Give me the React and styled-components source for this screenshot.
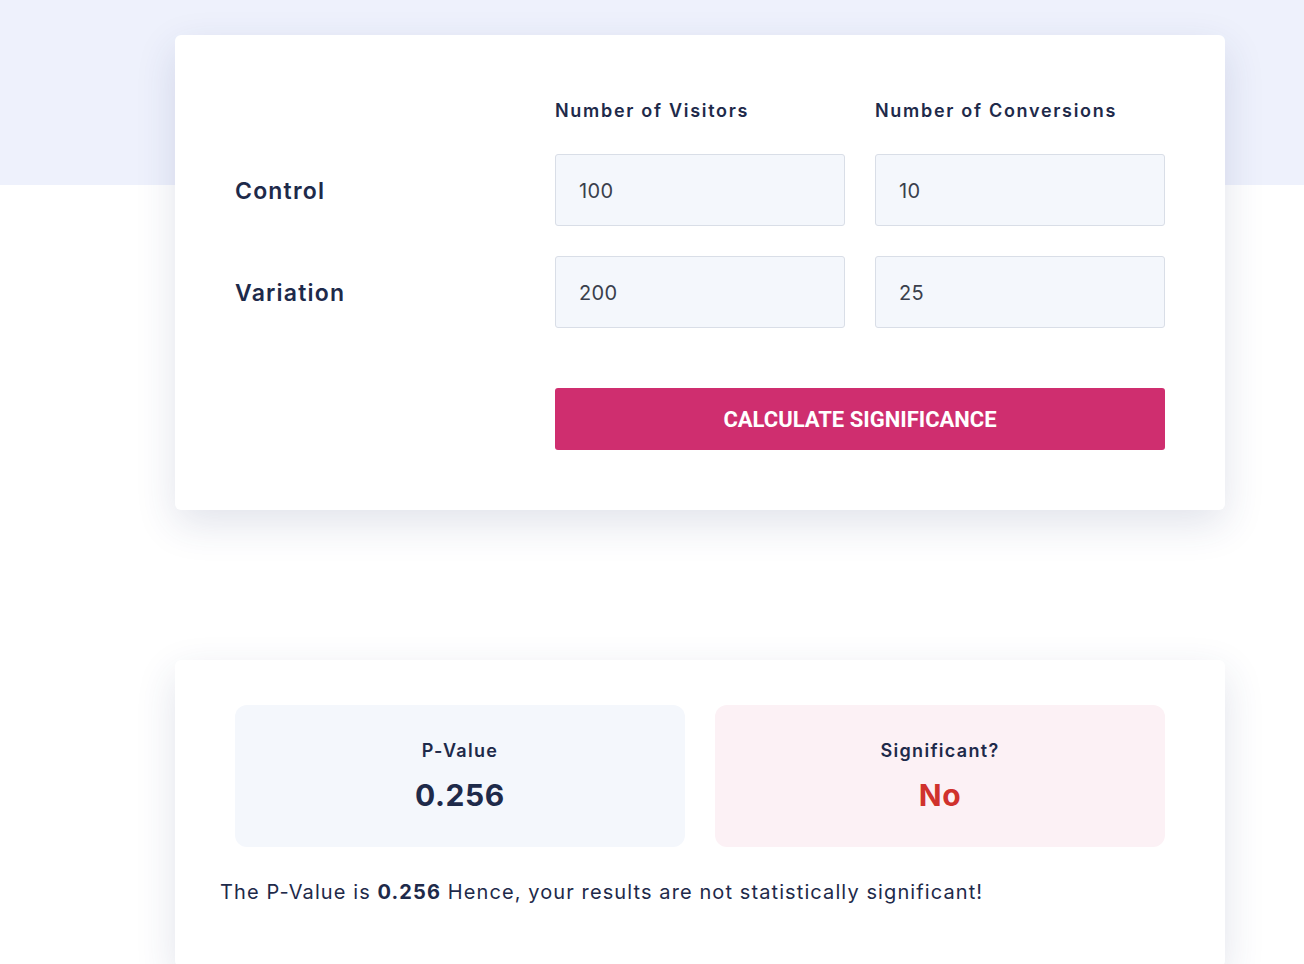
import React from 'react'
import styled, { createGlobalStyle } from 'styled-components'

const GlobalStyle = createGlobalStyle`
  body {
    margin: 0;
    background: #fff;
    font-family: Inter, "Noto Sans", sans-serif;
    color: #1e2a4a;
  }
`

const Page = styled.div`
  min-height: 964px;
  padding: 35px 0 0 175px;
  background: linear-gradient(#eef1fc 0, #eef1fc 185px, #fff 185px);
  box-sizing: border-box;
  overflow: hidden;
`

const Card = styled.div`
  width: 1050px;
  box-sizing: border-box;
  background: #fff;
  border-radius: 6px;
  box-shadow: 0 14px 40px rgba(40, 60, 110, 0.14);
  padding: ${p => p.$pad};
  margin-bottom: ${p => p.$gap || 0};
`

const Form = styled.div`
  display: grid;
  grid-template-columns: 290px 290px 290px;
  column-gap: 30px;
  row-gap: 30px;
  align-items: center;
`

const ColHead = styled.div`
  font-size: 18px;
  font-weight: 600;
  letter-spacing: 1.7px;
  height: 30px;
  line-height: 32px;
  margin-bottom: -1px;
  white-space: nowrap;
`

const RowLabel = styled.div`
  font-size: 23px;
  font-weight: 600;
  letter-spacing: 1.2px;
  padding-top: 2px;
`

const Field = styled.input`
  height: 72px;
  width: 100%;
  box-sizing: border-box;
  background: #f4f7fc;
  border: 1px solid #d9dee7;
  border-radius: 3px;
  padding: 2px 23px 0;
  font-family: Inter, sans-serif;
  font-size: 20px;
  letter-spacing: 0.4px;
  color: #3a3f4c;
  outline: none;
`

const Button = styled.button`
  grid-column: 2 / 4;
  height: 62px;
  margin-top: 30px;
  border: none;
  border-radius: 3px;
  background: #cf2e6f;
  color: #fff;
  font-family: Roboto, "Liberation Sans", sans-serif;
  font-weight: 700;
  font-size: 22px;
  cursor: pointer;
`

const Stats = styled.div`
  display: grid;
  grid-template-columns: 450px 450px;
  gap: 30px;
  padding: 0 15px;
`

const StatBox = styled.div`
  height: 142px;
  border-radius: 12px;
  background: ${p => p.$bg};
  display: flex;
  flex-direction: column;
  align-items: center;
  justify-content: center;
  gap: 14px;
`

const StatLabel = styled.div`
  font-size: 18px;
  font-weight: 600;
  letter-spacing: 1.3px;
  line-height: 24px;
`

const StatValue = styled.div`
  font-size: 30px;
  font-weight: 700;
  letter-spacing: 0.6px;
  line-height: 36px;
  color: ${p => p.$color};
`

const Summary = styled.p`
  margin: 30px 0 0;
  font-size: 20px;
  line-height: 30px;
  letter-spacing: 1.1px;

  b {
    font-weight: 700;
  }
`

export default function App() {
  return (
    <>
      <GlobalStyle />
      <Page>
        <Card $pad="60px 60px 60px" $gap="150px">
          <Form>
            <div />
            <ColHead>Number of Visitors</ColHead>
            <ColHead>Number of Conversions</ColHead>

            <RowLabel>Control</RowLabel>
            <Field defaultValue="100" />
            <Field defaultValue="10" />

            <RowLabel>Variation</RowLabel>
            <Field defaultValue="200" />
            <Field defaultValue="25" />

            <Button>CALCULATE SIGNIFICANCE</Button>
          </Form>
        </Card>

        <Card $pad="45px 45px 60px">
          <Stats>
            <StatBox $bg="#f4f7fc">
              <StatLabel>P-Value</StatLabel>
              <StatValue $color="#1e2a4a">0.256</StatValue>
            </StatBox>
            <StatBox $bg="#fcf1f5">
              <StatLabel>Significant?</StatLabel>
              <StatValue $color="#d0322d">No</StatValue>
            </StatBox>
          </Stats>
          <Summary>
            The P-Value is <b>0.256</b> Hence, your results are not statistically significant!
          </Summary>
        </Card>
      </Page>
    </>
  )
}
